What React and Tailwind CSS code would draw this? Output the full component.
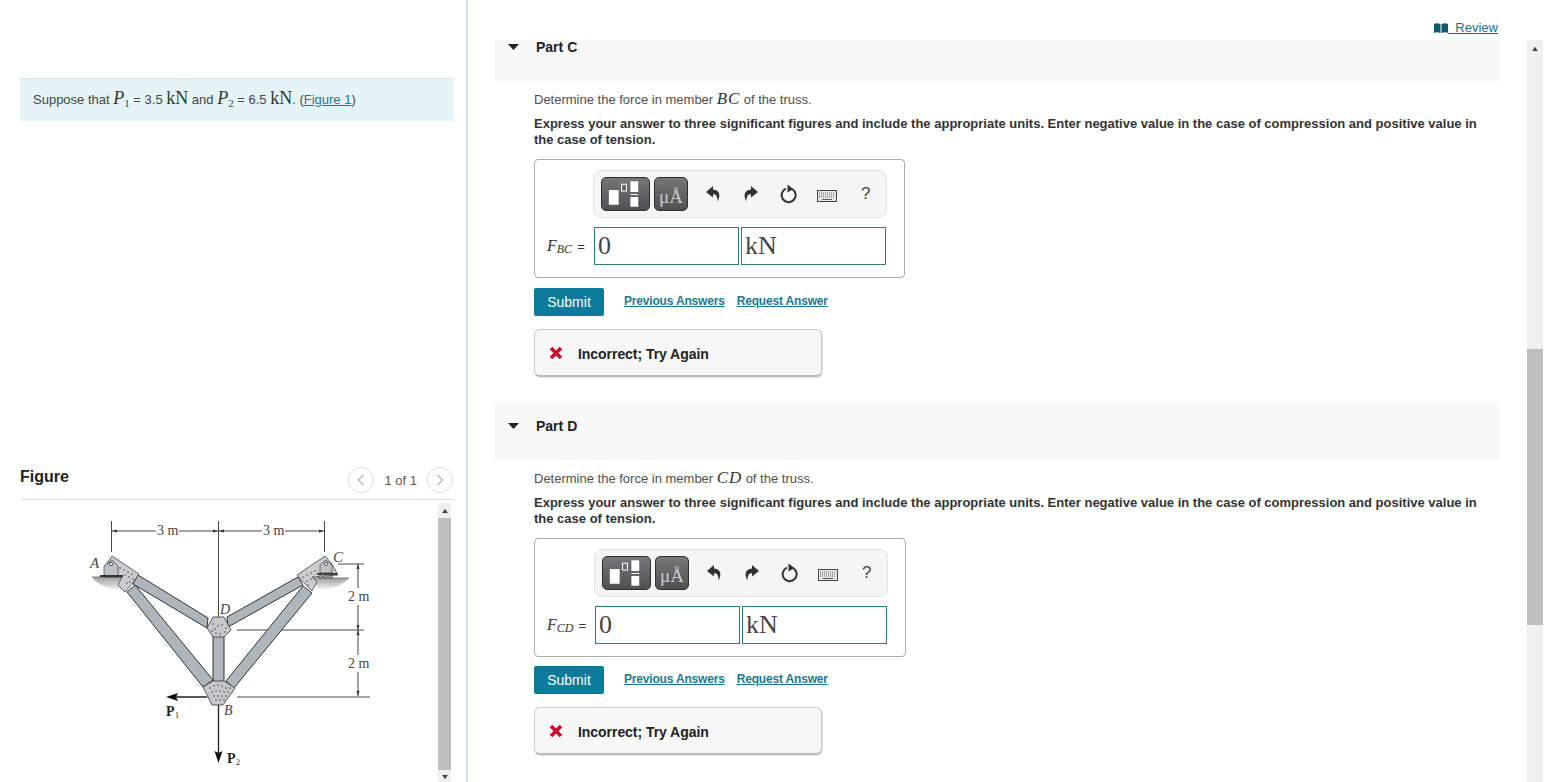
import React from 'react';

const serif = "font-['Liberation_Serif',serif]";

const Triangle = ({ className, dir = 'up' }) => (
  <svg width="8" height="6" viewBox="0 0 8 6" className={className}>
    <path d={dir === 'up' ? 'M4 0 L8 6 H0 Z' : 'M0 0 H8 L4 6 Z'} fill="#444" />
  </svg>
);

// dark gradient button with the white template boxes
const TemplateIcon = () => (
  <svg width="48" height="32" viewBox="0 0 48 32">
    <rect x="7" y="12" width="10" height="15" fill="#fff" />
    <rect x="20" y="6" width="5" height="7" fill="none" stroke="#fff" strokeWidth="1" />
    <rect x="29" y="3" width="8" height="11" fill="#fff" />
    <rect x="29" y="16" width="8" height="1" fill="#fff" />
    <rect x="29" y="19" width="8" height="10" fill="#fff" />
  </svg>
);

const UndoIcon = ({ flip }) => (
  <svg width="16" height="18" viewBox="0 0 16 18" className={flip ? '-scale-x-100' : ''}>
    <path d="M8 1 L1 7 L8 12.500 V9.300 C11 9.300 12.500 11 12.500 16.500 C15.500 11.500 15.500 5 8 4.500 Z" fill="#333" />
  </svg>
);

const ResetIcon = () => (
  <svg width="18" height="20" viewBox="0 0 18 20">
    <path d="M12.500 5.300 A7 7 0 1 1 6 4.700" fill="none" stroke="#333" strokeWidth="2" />
    <path d="M7.500 0.500 L13.500 5 L7.500 8.500 Z" fill="#333" />
  </svg>
);

const KeyboardIcon = () => (
  <svg width="20" height="12" viewBox="0 0 20 12" className="mt-[4px]">
    <rect x="0.500" y="0.500" width="19" height="11" fill="#e8e8e8" stroke="#444" />
    <path d="M2 3 H18 M2 5 H18 M2 7 H18" stroke="#666" strokeWidth="1" strokeDasharray="1 1" />
    <path d="M5 9.500 H15" stroke="#555" strokeWidth="1" />
  </svg>
);

const BookIcon = () => (
  <svg width="14" height="10" viewBox="0 0 14 10">
    <path d="M0 1 C2 0 4 0 6.500 1 V10 C4 9 2 9 0 10 Z" fill="#0e5a70" />
    <path d="M14 1 C12 0 10 0 7.500 1 V10 C10 9 12 9 14 10 Z" fill="#0e5a70" />
  </svg>
);

const Part = ({ letter, member, sub, inset }) => (
  <section className="h-[379px]">
    <div className="h-[57px] bg-[#f8f8f8] flex items-start pt-[15px] pl-[14px]">
      <svg width="11" height="6" viewBox="0 0 11 6" className="mt-[5px]">
        <path d="M0 0 H11 L5.500 6 Z" fill="#222" />
      </svg>
      <h3 className="ml-[17px] text-[14px] leading-[16px] font-bold text-[#222]">Part {letter}</h3>
    </div>
    <div className="pl-[40px] pr-[15px]">
      <p className="mt-[9px] h-[18px] text-[13px] leading-[18px] text-[#4f4f4f]">
        Determine the force in member <span className={`${serif} italic text-[17px] tracking-[0.8px] text-[#333]`}>{member}</span> of the truss.
      </p>
      <p className="mt-[8px] text-[13px] leading-[16px] font-bold text-[#333]">
        Express your answer to three significant figures and include the appropriate units. Enter negative value in the case of compression and positive value in the case of tension.
      </p>
      <div className={`mt-[11px] h-[119px] border border-[#aaa] rounded-[4px] ${inset ? 'w-[372px]' : 'w-[371px]'}`}>
        <div className={`mt-[10px] w-[294px] h-[48px] bg-[#f5f5f5] border border-[#e2e2e2] rounded-[8px] flex items-center pl-[7px] ${inset ? 'ml-[59px]' : 'ml-[58px]'}`}>
          <button className="w-[49px] h-[34px] rounded-[5px] border border-[#2f2f2f] bg-gradient-to-b from-[#77777a] to-[#505053] flex items-center justify-center">
            <TemplateIcon />
          </button>
          <button className={`ml-[4px] w-[34px] h-[34px] rounded-[5px] border border-[#2f2f2f] bg-gradient-to-b from-[#77777a] to-[#505053] text-[#c9c9c9] ${serif} text-[19px] leading-[38px]`}>
            μÅ
          </button>
          <span className="ml-[17px] w-[16px] flex justify-center"><UndoIcon /></span>
          <span className="ml-[22px] w-[16px] flex justify-center"><UndoIcon flip /></span>
          <span className="ml-[21px] w-[18px] flex justify-center"><ResetIcon /></span>
          <span className="ml-[19px] w-[20px] flex justify-center"><KeyboardIcon /></span>
          <span className="ml-[24px] text-[17px] leading-[20px] text-[#444]">?</span>
        </div>
        <div className="mt-[9px] flex items-center pl-[12px]">
          <span className={`${inset ? 'w-[48px]' : 'w-[47px]'} whitespace-nowrap text-[#333]`}>
            <span className={`${serif} italic text-[16px]`}>F</span>
            <span className={`${serif} italic text-[12px] relative top-[2px]`}>{sub}</span>
            <span className="text-[13px] ml-[5px]">=</span>
          </span>
          <div className="w-[145px] h-[38px] border border-[#2b7d80] flex items-center pl-[3px]">
            <span className={`${serif} text-[26px] text-[#444] -mt-[1px]`}>0</span>
          </div>
          <div className="ml-[2px] w-[145px] h-[38px] border border-[#2b7d80] flex items-center pl-[3px]">
            <span className={`${serif} text-[26px] text-[#444] -mt-[1px]`}>kN</span>
          </div>
        </div>
      </div>
      <div className={`${inset ? 'mt-[9px]' : 'mt-[10px]'} flex items-center`}>
        <button className="w-[70px] h-[28px] rounded-[2px] bg-[#0b7a9b] text-white text-[14px] leading-[28px]">Submit</button>
        <a className="ml-[20px] text-[12px] font-bold underline text-[#1b7a8f] tracking-[-0.18px] -mt-[3px]">Previous Answers</a>
        <a className="ml-[12px] text-[12px] font-bold underline text-[#1b7a8f] tracking-[-0.18px] -mt-[3px]">Request Answer</a>
      </div>
      <div className="mt-[13px] w-[288px] h-[48px] bg-[#f7f7f7] border border-[#ccc] border-b-2 border-b-[#bbb] rounded-[6px] flex items-center pl-[14px] pt-[3px] shadow-[1px_1px_1px_rgba(0,0,0,0.12)]">
        <svg width="14" height="14" viewBox="0 0 14 14" className="-mt-[2px]">
          <path d="M2 2 L12 12 M12 2 L2 12" stroke="#c8102e" strokeWidth="3.800" />
        </svg>
        <span className="ml-[15px] text-[14px] font-bold text-[#222] tracking-[-0.05px]">Incorrect; Try Again</span>
      </div>
    </div>
  </section>
);

// gusset rivets, drawn as short rows of dots
const Rivets = ({ points }) => (
  <g fill="#333">
    {points.map(([x, y], i) => <circle key={i} cx={x} cy={y} r="0.700" />)}
  </g>
);

const Member = ({ points }) => (
  <polygon points={points} fill="#aeb6bc" stroke="#333" strokeWidth="1" />
);

const TrussFigure = () => (
  <svg width="300" height="270" viewBox="80 510 300 270" className="block shrink-0">
    <defs>
      <linearGradient id="ground" x1="0" y1="0" x2="0" y2="1">
        <stop offset="0" stopColor="#a0a0a0" />
        <stop offset="1" stopColor="#f2f2f2" />
      </linearGradient>
    </defs>
    {/* dimension lines */}
    <g stroke="#333" strokeWidth="0.900" fill="none">
      <path d="M111.500 521 V552 M218.500 521 V617 M324.500 521 V552" />
      <path d="M112 531 H156 M179 531 H218 M219 531 H262 M285 531 H324" />
      <path d="M338 564 H364 M237 630 H364 M237 697 H370" />
      <path d="M358 564 V588 M358 605 V655 M358 672 V696" />
    </g>
    <g fill="#333">
      <path d="M112 531 l5 -1.500 v3 Z M218 531 l-5 -1.500 v3 Z M219 531 l5 -1.500 v3 Z M324 531 l-5 -1.500 v3 Z" />
      <path d="M358 564 l-1.500 5 h3 Z M358 630 l-1.500 -5 h3 Z M358 630 l-1.500 5 h3 Z M358 696 l-1.500 -5 h3 Z" />
    </g>
    {/* ground */}
    <path d="M92 577 H133 L125 590 C110 590 98 586 92 577 Z" fill="url(#ground)" />
    <path d="M313 578 H349 C342 586 330 590 318 589 Z" fill="url(#ground)" />
    <path d="M92 577 H133 M313 578 H349" stroke="#666" strokeWidth="0.800" />
    {/* members */}
    <Member points="138,575 208,618 207,628 133,584" />
    <Member points="298,577 227,617 228,627 303,585" />
    <Member points="135,585 213,680 203,687 127,592" />
    <Member points="303,586 226,681 234,688 312,593" />
    <Member points="213,636 224,636 224,682 213,682" />
    {/* supports */}
    <polygon points="112,556 139,574 132,584 125,592 118,585 122,577 105,577 105,566" fill="#c9cdd0" stroke="#444" strokeWidth="0.800" />
    <polygon points="325,556 297,575 305,584 312,591 317,582 312,577 338,575 332,564" fill="#c9cdd0" stroke="#444" strokeWidth="0.800" />
    <path d="M104 576 V566 L112 560 L118 566 V576 Z" fill="#bcc2c6" stroke="#444" strokeWidth="0.700" />
    <circle cx="111" cy="564" r="1.600" fill="#fff" stroke="#333" strokeWidth="0.800" />
    <rect x="100" y="575" width="23" height="2" fill="#333" />
    <path d="M320 573 V565 L326 560 L332 565 V573 Z" fill="#bcc2c6" stroke="#444" strokeWidth="0.700" />
    <circle cx="326" cy="564" r="1.600" fill="#fff" stroke="#333" strokeWidth="0.800" />
    <rect x="317" y="573" width="20" height="1.800" fill="#333" />
    <path d="M319 576 h3 v2 h-3 Z M324 576 h3 v2 h-3 Z M329 576 h3 v2 h-3 Z" fill="#fff" stroke="#333" strokeWidth="0.800" />
    <Rivets points={[[120,568],[124,570],[128,572],[132,574],[125,575],[129,577],[133,579],[127,583],[130,582],[303,577],[307,575],[311,573],[315,571],[307,581],[311,579],[308,585]]} />
    {/* gusset plates */}
    <polygon points="213,617 224,617 231,630 224,637 213,637 207,628" fill="#c5c9cc" stroke="#333" strokeWidth="0.800" />
    <polygon points="203,687 213,681 224,681 235,688 223,705 212,705" fill="#c5c9cc" stroke="#333" strokeWidth="0.800" />
    <Rivets points={[[213,624],[218,626],[222,625],[226,628],[212,631],[216,633],[220,634],[225,632],[215,629],[210,688],[214,686],[218,685],[222,686],[226,688],[230,688],[212,692],[216,691],[220,691],[224,692],[228,692],[214,696],[218,696],[222,696],[226,696],[216,700],[220,700],[224,700]]} />
    {/* loads */}
    <path d="M207 697 H172" stroke="#222" strokeWidth="1.300" />
    <path d="M166 697 L178 693 L176 697 L178 701 Z" fill="#111" />
    <path d="M218.500 705 V756" stroke="#222" strokeWidth="1.300" />
    <path d="M218.500 763 L214.500 751 L218.500 753 L222.500 751 Z" fill="#111" />
    {/* labels */}
    <g fontFamily="Liberation Serif, serif" fill="#444">
      <text x="157" y="535" fontSize="14">3 m</text>
      <text x="263" y="535" fontSize="14">3 m</text>
      <text x="348" y="601" fontSize="14">2 m</text>
      <text x="348" y="668" fontSize="14">2 m</text>
      <text x="90" y="568" fontSize="15" fontStyle="italic">A</text>
      <text x="220" y="614" fontSize="14" fontStyle="italic">D</text>
      <text x="333" y="562" fontSize="15" fontStyle="italic">C</text>
      <text x="224" y="715" fontSize="14" fontStyle="italic">B</text>
      <text x="166" y="716" fontSize="14" fontWeight="bold" fill="#222">P</text>
      <text x="175" y="718" fontSize="8" fill="#222">1</text>
      <text x="227" y="763" fontSize="14" fontWeight="bold" fill="#222">P</text>
      <text x="236" y="765" fontSize="8" fill="#222">2</text>
    </g>
  </svg>
);

const App = () => {
  return (
    <div className="flex h-[782px] w-[1553px] overflow-hidden bg-white font-['Liberation_Sans',Arial,sans-serif]">
      {/* left pane */}
      <aside className="w-[468px] shrink-0 border-r-2 border-r-[#d5e4ec] pl-[20px] pr-[12px] flex flex-col">
        <div className="mt-[78px] h-[43px] bg-[#e5f4f7] border-t border-t-[#d8e4e6] pl-[13px] pb-[4px] flex items-center text-[13px] text-[#444]">
          <span className="whitespace-nowrap">
            Suppose that <span className={`${serif} italic text-[18px] text-[#333]`}>P</span><span className={`${serif} text-[11px] relative top-[3px]`}>1</span> = 3.5 <span className={`${serif} text-[18px] text-[#333]`}>kN</span> and <span className={`${serif} italic text-[18px] text-[#333]`}>P</span><span className={`${serif} text-[11px] relative top-[3px]`}>2</span> = 6.5 <span className={`${serif} text-[18px] text-[#333]`}>kN</span>. (<a className="underline text-[#1b7a8f]">Figure 1</a>)
          </span>
        </div>
        <div className="mt-[346px] h-[33px] border-b border-b-[#ddd] flex items-start">
          <h2 className="text-[16px] leading-[18px] font-bold text-[#222] mt-[1px]">Figure</h2>
          <div className="ml-auto mr-[1px] flex items-center">
            <span className="w-[26px] h-[26px] rounded-full border border-[#ddd] flex items-center justify-center">
              <svg width="8" height="12" viewBox="0 0 8 12"><path d="M6.500 1 L1.500 6 L6.500 11" fill="none" stroke="#bbb" strokeWidth="1.500" /></svg>
            </span>
            <span className="mx-[10px] text-[13px] text-[#555] mt-[1px]">1 of 1</span>
            <span className="w-[26px] h-[26px] rounded-full border border-[#ddd] flex items-center justify-center">
              <svg width="8" height="12" viewBox="0 0 8 12"><path d="M1.500 1 L6.500 6 L1.500 11" fill="none" stroke="#bbb" strokeWidth="1.500" /></svg>
            </span>
          </div>
        </div>
        <div className="mt-[3px] flex-1 min-h-0 flex justify-between pr-[3px]">
          <div className="pl-[60px] pt-[7px]"><TrussFigure /></div>
          <div className="w-[13px] bg-[#f1f1f1] flex flex-col items-center">
            <Triangle dir="up" className="mt-[5px] mb-[4px] scale-75" />
            <div className="w-[13px] flex-1 bg-[#bfbfbf]" />
            <Triangle dir="down" className="mt-[4px] mb-[2px] scale-75" />
          </div>
        </div>
      </aside>

      {/* right pane */}
      <main className="flex-1 min-w-0 flex flex-col text-[#333]">
        <div className="h-[40px] shrink-0 flex items-start justify-end pr-[55px] pt-[20px]">
          <a className="flex items-center text-[13px] leading-[16px] text-[#1b6f88] underline">
            <BookIcon /><span className="whitespace-pre">  Review</span>
          </a>
        </div>
        <div className="flex-1 min-h-0 flex">
          <div className="flex-1 min-w-0 overflow-hidden pl-[26px] pr-[27px]">
            <div className="-mt-[16px]">
              <Part letter="C" member="BC" sub="BC" />
              <Part letter="D" member="CD" sub="CD" inset />
            </div>
          </div>
          <div className="w-[16px] mr-[10px] shrink-0 bg-[#f1f1f1] flex flex-col items-center">
            <Triangle dir="up" className="mt-[6px] scale-75" />
            <div className="w-[16px] h-[276px] mt-[297px] bg-[#bfbfbf]" />
          </div>
        </div>
      </main>
    </div>
  );
};

export default App;
